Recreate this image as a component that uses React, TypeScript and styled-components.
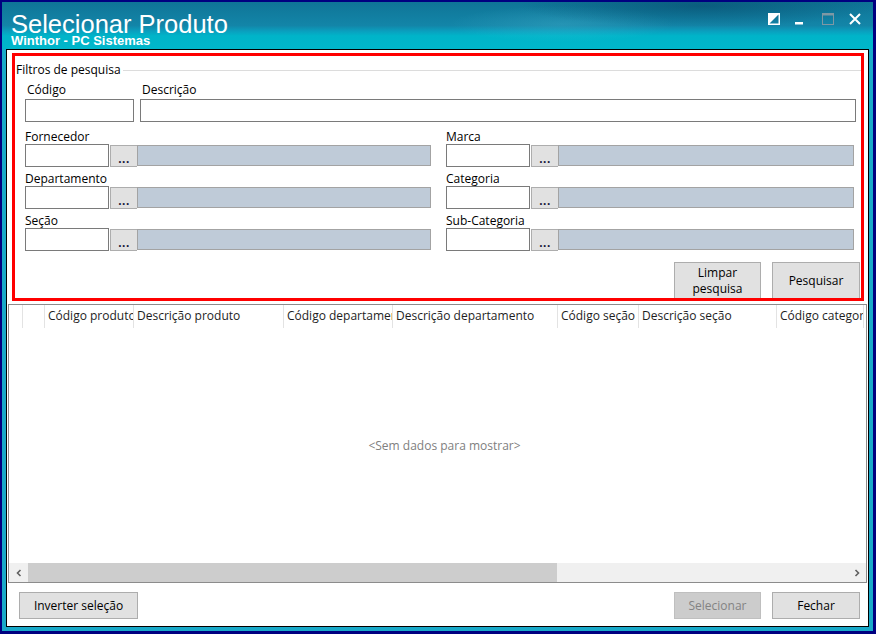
import React from 'react';
import styled, { createGlobalStyle } from 'styled-components';

const GlobalStyle = createGlobalStyle`
  html, body {
    margin: 0;
    padding: 0;
  }
  body {
    width: 876px;
    height: 634px;
    overflow: hidden;
    font-family: "Open Sans", "Liberation Sans", sans-serif;
    font-size: 12px;
    color: #000;
  }
  * {
    box-sizing: border-box;
  }
`;

const Window = styled.div`
  width: 876px;
  height: 634px;
  display: flex;
  flex-direction: column;
  background: #19a9c9;
  border: 2px solid #000080;
  border-right-width: 3px;
  border-bottom-width: 3px;
`;

const TitleBar = styled.div`
  height: 47px;
  flex-shrink: 0;
  display: flex;
  justify-content: space-between;
  padding: 12px 12px 0 9px;
  background:
    radial-gradient(ellipse 260px 30px at 700px 4px, rgba(4, 60, 92, 0.45), transparent 70%),
    radial-gradient(ellipse 160px 26px at 560px 22px, rgba(120, 220, 240, 0.18), transparent 70%),
    linear-gradient(180deg, #0f7597 0%, #1385a8 50%, #0a9fbe 62%, #00b4c9 72%, #00b7cb 100%);
`;

const TitleText = styled.div`
  display: flex;
  flex-direction: column;
  color: #fff;
  font-family: "Liberation Sans", Arial, sans-serif;
`;

const Title = styled.div`
  font-size: 25.5px;
  line-height: 21px;
`;

const Subtitle = styled.div`
  font-size: 13px;
  font-weight: bold;
  line-height: 12px;
`;

const Controls = styled.div`
  display: flex;
  gap: 15px;
  margin-top: -1px;
`;

const ControlIcon = styled.svg`
  width: 12px;
  height: 12px;
  display: block;
`;

const Content = styled.div`
  flex: 1;
  margin: 0 4px 4px 4px;
  border: 1px solid #000;
  background: #fff;
  display: flex;
  flex-direction: column;
`;

const FilterBox = styled.div`
  margin: 3px 4px 0 5px;
  height: 248px;
  border: 3px solid #ff0000;
  overflow: hidden;
  display: flex;
  flex-direction: column;
`;

const GroupHeader = styled.div`
  margin-top: 6px;
  padding-left: 1px;
  display: flex;
  align-items: center;
  line-height: 15px;
  color: #000;
`;

const GroupLine = styled.div`
  flex: 1;
  height: 1px;
  margin-left: 2px;
  margin-top: 1px;
  background: #dcdcdc;
`;

const TopRow = styled.div`
  margin-top: 5px;
  padding: 0 5px 0 10px;
  display: flex;
  gap: 6px;
`;

const Field = styled.div<{ $width?: number }>`
  display: flex;
  flex-direction: column;
  ${p => (p.$width ? `width: ${p.$width}px;` : 'flex: 1;')}
`;

const Label = styled.div<{ $indent?: number }>`
  height: 15px;
  line-height: 15px;
  padding-left: ${p => p.$indent ?? 0}px;
  white-space: nowrap;
`;

const TextInput = styled.div<{ $width?: number; $gap?: number }>`
  height: 23px;
  margin-top: ${p => p.$gap ?? 0}px;
  border: 1px solid #7a7a7a;
  background: #fff;
  ${p => (p.$width ? `width: ${p.$width}px; flex-shrink: 0;` : '')}
`;

const LookupGrid = styled.div`
  margin-top: 7px;
  padding: 0 7px 0 10px;
  display: grid;
  grid-template-columns: 406px 1fr;
  column-gap: 15px;
  row-gap: 4px;
`;

const LookupRow = styled.div`
  display: flex;
  align-items: flex-end;
`;

const DotsButton = styled.div`
  width: 27px;
  height: 22px;
  margin-left: 1px;
  flex-shrink: 0;
  background: #e1e1e1;
  border: 1px solid #adadad;
  border-right: none;
  display: flex;
  align-items: flex-end;
  justify-content: center;
  font-family: "Liberation Sans", sans-serif;
  font-size: 12px;
  font-weight: bold;
  line-height: 14px;
  letter-spacing: 0.5px;
  color: #1c1c3c;
`;

const Description = styled.div`
  flex: 1;
  height: 21px;
  margin-bottom: 1px;
  background: #bfcbd8;
  border: 1px solid #a3a3a3;
`;

const Separator = styled.div`
  margin-top: 7px;
  height: 1px;
  background: #dedede;
`;

const FilterActions = styled.div`
  margin-top: 4px;
  padding-right: 1px;
  display: flex;
  justify-content: flex-end;
  gap: 11px;
`;

const Button = styled.button<{ $width: number; $height?: number }>`
  width: ${p => p.$width}px;
  height: ${p => p.$height ?? 27}px;
  padding: 0;
  background: #e1e1e1;
  border: 1px solid #adadad;
  font-family: inherit;
  font-size: 12px;
  line-height: 16px;
  color: #000;
  text-align: center;

  &:disabled {
    background: #cccccc;
    border-color: #bfbfbf;
    color: #838383;
  }
`;

const Grid = styled.div`
  margin: 3px 1px 0 1px;
  height: 279px;
  border: 1px solid #8c8c8c;
  display: flex;
  flex-direction: column;
  overflow: hidden;
`;

const HeaderRow = styled.div`
  height: 23px;
  flex-shrink: 0;
  display: flex;
`;

const HeaderCell = styled.div<{ $width: number }>`
  width: ${p => p.$width}px;
  flex-shrink: 0;
  padding-left: 3px;
  border-right: 1px solid #e3e3e3;
  line-height: 22px;
  white-space: nowrap;
  overflow: hidden;
  color: #1e1e1e;
`;

const GridBody = styled.div`
  flex: 1;
  display: flex;
  align-items: center;
  justify-content: center;
  padding-left: 14px;
  color: #808080;
`;

const ScrollBar = styled.div`
  height: 19px;
  flex-shrink: 0;
  display: flex;
  background: #f0f0f0;
`;

const ScrollArrow = styled.div<{ $width: number }>`
  width: ${p => p.$width}px;
  flex-shrink: 0;
  display: flex;
  align-items: center;
  justify-content: center;
`;

const ScrollThumb = styled.div`
  width: 529px;
  background: #cdcdcd;
`;

const ScrollTrack = styled.div`
  flex: 1;
`;

const Footer = styled.div`
  padding: 9px 8px 0 12px;
  display: flex;
  gap: 11px;
`;

const Spacer = styled.div`
  flex: 1;
`;

const columns: [string, number][] = [
  ['', 14],
  ['', 22],
  ['Código produto', 89],
  ['Descrição produto', 150],
  ['Código departamento', 109],
  ['Descrição departamento', 165],
  ['Código seção', 81],
  ['Descrição seção', 138],
  ['Código categoria', 87],
];

const lookups: [string, string][] = [
  ['Fornecedor', 'Marca'],
  ['Departamento', 'Categoria'],
  ['Seção', 'Sub-Categoria'],
];

const Lookup: React.FC<{ label: string }> = ({ label }) => (
  <Field>
    <Label>{label}</Label>
    <LookupRow>
      <TextInput $width={84} />
      <DotsButton>...</DotsButton>
      <Description />
    </LookupRow>
  </Field>
);

const Chevron: React.FC<{ dir: 'left' | 'right' }> = ({ dir }) => (
  <svg width="6" height="8" viewBox="0 0 6 8">
    <polyline
      points={dir === 'left' ? '4.5,1 1.5,4 4.5,7' : '1.5,1 4.5,4 1.5,7'}
      fill="none"
      stroke="#606060"
      strokeWidth="1.6"
    />
  </svg>
);

export default function App() {
  return (
    <>
      <GlobalStyle />
      <Window>
        <TitleBar>
          <TitleText>
            <Title>Selecionar Produto</Title>
            <Subtitle>Winthor - PC Sistemas</Subtitle>
          </TitleText>
          <Controls>
            <ControlIcon viewBox="0 0 12 12">
              <rect x="0.75" y="0.75" width="10.5" height="10.5" fill="none" stroke="#fff" strokeWidth="1.5" />
              <polygon points="0,0 12,0 0,12" fill="#fff" />
            </ControlIcon>
            <ControlIcon viewBox="0 0 12 12">
              <rect x="0" y="9" width="8" height="2.5" fill="#fff" />
            </ControlIcon>
            <ControlIcon viewBox="0 0 12 12">
              <rect x="0.5" y="0.5" width="11" height="11" fill="none" stroke="#7f98a4" strokeWidth="1" />
              <rect x="0.5" y="0.5" width="11" height="2" fill="#7f98a4" />
            </ControlIcon>
            <ControlIcon viewBox="0 0 12 12">
              <path d="M1 1 L11 11 M11 1 L1 11" stroke="#fff" strokeWidth="2" />
            </ControlIcon>
          </Controls>
        </TitleBar>

        <Content>
          <FilterBox>
            <GroupHeader>
              Filtros de pesquisa
              <GroupLine />
            </GroupHeader>

            <TopRow>
              <Field $width={109}>
                <Label $indent={2}>Código</Label>
                <TextInput $gap={2} />
              </Field>
              <Field>
                <Label $indent={2}>Descrição</Label>
                <TextInput $gap={2} />
              </Field>
            </TopRow>

            <LookupGrid>
              {lookups.map(([left, right]) => (
                <React.Fragment key={left}>
                  <Lookup label={left} />
                  <Lookup label={right} />
                </React.Fragment>
              ))}
            </LookupGrid>

            <Separator />

            <FilterActions>
              <Button $width={87} $height={38}>
                Limpar
                <br />
                pesquisa
              </Button>
              <Button $width={88} $height={38}>
                Pesquisar
              </Button>
            </FilterActions>
          </FilterBox>

          <Grid>
            <HeaderRow>
              {columns.map(([name, width], i) => (
                <HeaderCell key={i} $width={width}>
                  {name}
                </HeaderCell>
              ))}
            </HeaderRow>
            <GridBody>&lt;Sem dados para mostrar&gt;</GridBody>
            <ScrollBar>
              <ScrollArrow $width={19}>
                <Chevron dir="left" />
              </ScrollArrow>
              <ScrollThumb />
              <ScrollTrack />
              <ScrollArrow $width={18}>
                <Chevron dir="right" />
              </ScrollArrow>
            </ScrollBar>
          </Grid>

          <Footer>
            <Button $width={119}>Inverter seleção</Button>
            <Spacer />
            <Button $width={87} disabled>
              Selecionar
            </Button>
            <Button $width={88}>Fechar</Button>
          </Footer>
        </Content>
      </Window>
    </>
  );
}
